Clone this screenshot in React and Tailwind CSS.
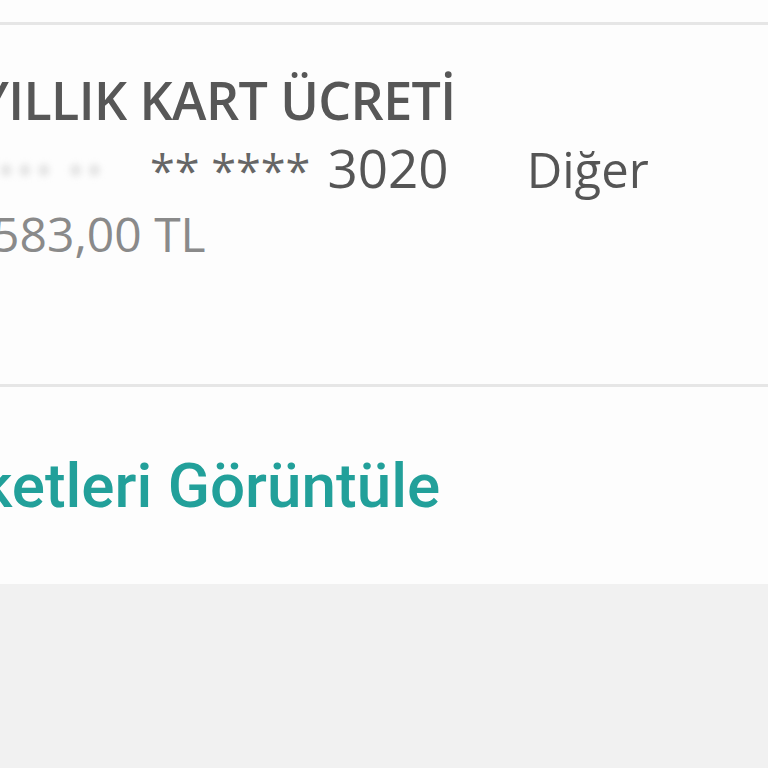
export default function App() {
  return (
    <div className="w-[768px] h-[768px] overflow-hidden bg-[#f1f1f1]" style={{ fontFamily: '"Open Sans", "Noto Sans", sans-serif' }}>
      <div className="h-[22px] bg-[#fdfdfd]" />
      <div className="h-[3px] bg-[#e6e6e6]" />
      <div className="h-[359px] bg-[#fdfdfd] overflow-hidden">
        <div className="-ml-[22px] pt-[45px] flex flex-col">
          <div className="text-[52px] leading-[60px] font-semibold text-[#575757] tracking-[-0.6px] whitespace-nowrap">YILLIK KART ÜCRETİ</div>
          <div className="flex items-baseline mt-[8px] whitespace-nowrap leading-[60px]">
            <span className="text-[50px] text-[#e4e4e4] blur-[3px] w-[172px]">•••• ••</span>
            <span className="text-[45px] text-[#666666]">** ****</span>
            <span className="text-[53px] font-medium text-[#555555] ml-[17px]">3020</span>
            <span className="text-[49px] font-medium text-[#555555] ml-[78px]">Diğer</span>
          </div>
          <div className="-ml-[26px] text-[48px] leading-[60px] text-[#8a8a8a] mt-[3px] whitespace-nowrap">1.583,00 TL</div>
        </div>
      </div>
      <div className="h-[3px] bg-[#e6e6e6]" />
      <div className="h-[197px] bg-[#fdfdfd] flex items-center overflow-hidden">
        <div className="-ml-[152px] text-[62px] font-medium text-[#22a09a] whitespace-nowrap" style={{ fontFamily: 'Roboto, "Liberation Sans", sans-serif' }}>
          Hareketleri Görüntüle
        </div>
      </div>
    </div>
  );
}
